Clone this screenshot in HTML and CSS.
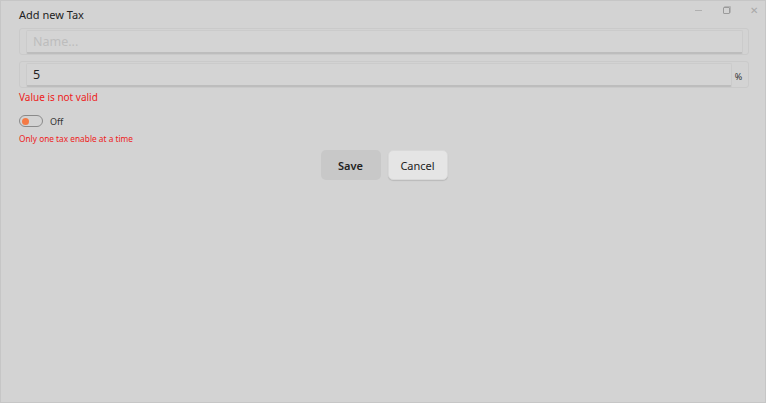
FILE: index.html
```html
<!DOCTYPE html>
<html lang="en">

<head>
    <meta charset="UTF-8">
    <meta name="viewport" content="width=device-width, initial-scale=1.0">
    <title>Add new Tax</title>
    <link rel="stylesheet" href="styles.css">
</head>

<body>
    <div class="window">
        <div class="window-controls">
            <span class="ctl ctl-min"></span>
            <span class="ctl ctl-max"></span>
            <span class="ctl ctl-close">✕</span>
        </div>
        <h1 class="title">Add new Tax</h1>

        <div class="field">
            <input class="field-input" type="text" placeholder="Name...">
        </div>

        <div class="field field-suffix">
            <input class="field-input" type="text" value="5">
            <span class="suffix">%</span>
        </div>
        <p class="error">Value is not valid</p>

        <div class="toggle-row">
            <span class="toggle"><span class="knob"></span></span>
            <span class="toggle-label">Off</span>
        </div>
        <p class="hint">Only one tax enable at a time</p>

        <div class="actions">
            <button class="btn btn-save">Save</button>
            <button class="btn btn-cancel">Cancel</button>
        </div>
    </div>
</body>

</html>
```

FILE: styles.css
```css
html,
body {
    margin: 0;
    padding: 0;
    height: 100%;
}

body {
    font-family: "Noto Sans", "Open Sans", sans-serif;
    background-color: #d3d3d3;
    color: #222;
}

.window {
    position: relative;
    box-sizing: border-box;
    height: 100%;
    padding: 5px 16px 0 18px;
    border: 1px solid #c6c6c6;
}

.window-controls {
    position: absolute;
    top: 2px;
    right: 4px;
    display: flex;
    gap: 14px;
    align-items: center;
    color: #a8a8a8;
}

.ctl {
    width: 14px;
    height: 14px;
    display: flex;
    align-items: center;
    justify-content: center;
    font-size: 10px;
}

.ctl-min::before {
    content: "";
    width: 7px;
    border-top: 1px solid #b0b0b0;
}

.ctl-max::before {
    content: "";
    width: 5px;
    height: 5px;
    border: 1px solid #9a9a9a;
    border-radius: 1px;
    box-shadow: 1px -1px 0 0 #b4b4b4;
}

.title {
    margin: 0 0 4px;
    font-size: 11px;
    font-weight: 400;
    line-height: 18px;
    color: #222;
}

.field {
    display: flex;
    align-items: stretch;
    height: 27px;
    box-sizing: border-box;
    padding: 1px 5px 0 6px;
    border: 1px solid #cacaca;
    border-radius: 3px;
    margin-bottom: 6px;
}

.field-input {
    flex: 1;
    min-width: 0;
    box-sizing: border-box;
    margin: 0;
    padding: 0 6px;
    border: 1px solid #cbcbcb;
    border-bottom: 2px solid #bdbdbd;
    border-radius: 2px;
    background-color: #d4d4d4;
    font-family: inherit;
    font-size: 12.5px;
    color: #222;
    outline: none;
}

.field-input::placeholder {
    color: #bdbdbd;
}

.field-suffix {
    padding-right: 3px;
    margin-bottom: 2px;
}

.suffix {
    width: 13px;
    display: flex;
    align-items: center;
    justify-content: center;
    font-size: 9px;
    color: #333;
    padding-top: 2px;
}

.error {
    margin: 0 0 10px;
    font-size: 10px;
    line-height: 14px;
    color: #ee1c1c;
}

.toggle-row {
    display: flex;
    align-items: center;
    gap: 7px;
    height: 14px;
}

.toggle {
    box-sizing: border-box;
    width: 24px;
    height: 12px;
    border: 1px solid #8a8a8a;
    border-radius: 6px;
    display: flex;
    align-items: center;
    padding-left: 2px;
}

.knob {
    width: 7px;
    height: 7px;
    border-radius: 50%;
    background-color: #f47a45;
}

.toggle-label {
    font-size: 9px;
    color: #333;
}

.hint {
    margin: 5px 0 0;
    font-size: 8.3px;
    line-height: 12px;
    color: #ee1c1c;
}

.actions {
    display: flex;
    justify-content: center;
    gap: 7px;
    margin-top: 5px;
}

.btn {
    width: 60px;
    height: 30px;
    border: none;
    border-radius: 5px;
    font-family: inherit;
    font-size: 11px;
    color: #222;
    cursor: pointer;
}

.btn-save {
    background-color: #c8c8c8;
    font-weight: 600;
}

.btn-cancel {
    background-color: #e5e5e5;
    border: 1px solid #d9d9d9;
    box-shadow: 0 1px 1px rgba(0, 0, 0, 0.12);
}
```
